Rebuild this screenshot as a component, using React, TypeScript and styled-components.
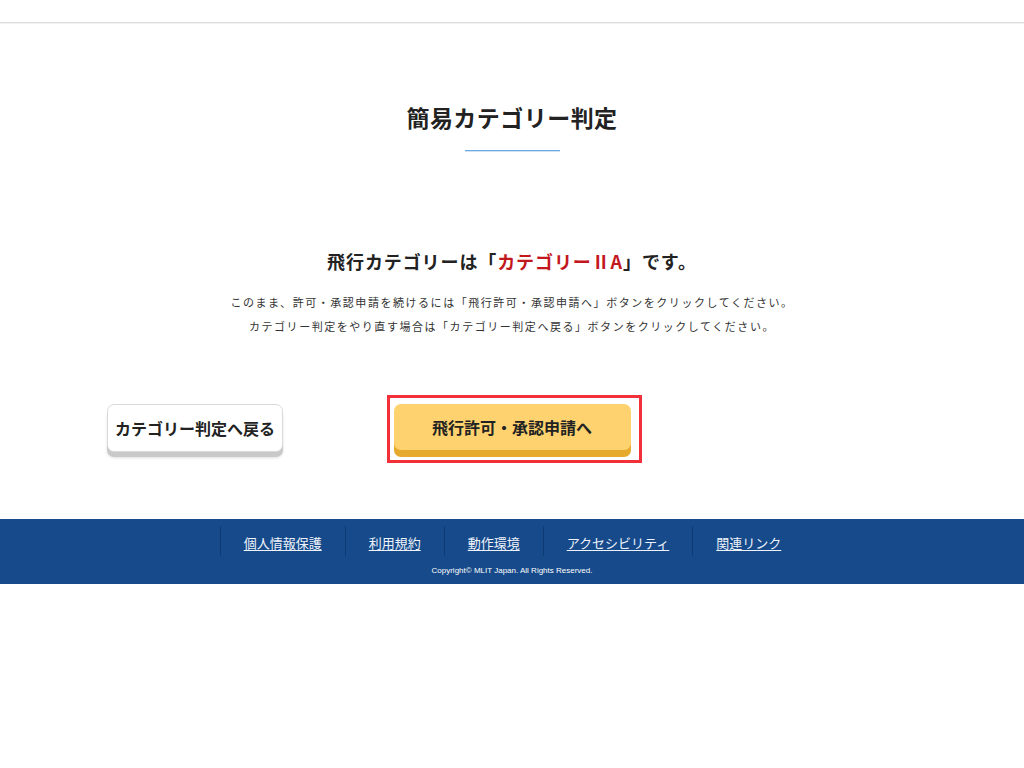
import styled, { createGlobalStyle } from "styled-components";

const GlobalStyle = createGlobalStyle`
	html, body {
		margin: 0;
		padding: 0;
		background: #fff;
	}
	body {
		font-family: "Noto Sans CJK JP", "Noto Sans", sans-serif;
		color: #222;
	}
`;

const footerLinks = ["個人情報保護", "利用規約", "動作環境", "アクセシビリティ", "関連リンク"];

export default function App() {
	return (
		<>
			<GlobalStyle />
			<Header />
			<Main>
				<Title>簡易カテゴリー判定</Title>
				<TitleLine />
				<ResultText>
					飛行カテゴリーは「<Accent>カテゴリーⅡA</Accent>」です。
				</ResultText>
				<Note>
					このまま、許可・承認申請を続けるには「飛行許可・承認申請へ」ボタンをクリックしてください。
					<br />
					カテゴリー判定をやり直す場合は「カテゴリー判定へ戻る」ボタンをクリックしてください。
				</Note>
				<ButtonRow>
					<Cell>
						<BackButton>カテゴリー判定へ戻る</BackButton>
					</Cell>
					<Cell $center>
						<Highlight>
							<ApplyButton>飛行許可・承認申請へ</ApplyButton>
						</Highlight>
					</Cell>
					<Cell />
				</ButtonRow>
			</Main>
			<Footer>
				<LinkList>
					{footerLinks.map((l) => (
						<LinkItem key={l}>
							<FooterLink href="#">{l}</FooterLink>
						</LinkItem>
					))}
				</LinkList>
				<Copyright>Copyright© MLIT Japan. All Rights Reserved.</Copyright>
			</Footer>
		</>
	);
}

const Header = styled.header`
	height: 22px;
	border-bottom: 1px solid #dcdcdc;
	box-shadow: 0 1px 0 #f1f1f1;
`;

const Main = styled.main`
	display: flex;
	flex-direction: column;
	align-items: center;
	padding: 76px 0 67px;
`;

const Title = styled.h1`
	margin: 0;
	font-size: 23px;
	line-height: 36px;
	font-weight: 700;
	letter-spacing: 0.02em;
	color: #222;
`;

const TitleLine = styled.div`
	width: 95px;
	height: 1px;
	margin-top: 15px;
	background: #6fa9e2;
	border-bottom: 1px solid #cfe3f7;
`;

const ResultText = styled.p`
	margin: 96px 0 0;
	font-size: 18px;
	line-height: 27px;
	font-weight: 700;
	letter-spacing: 0.05em;
	color: #222;
`;

const Accent = styled.span`
	color: #c3171e;
`;

const Note = styled.p`
	margin: 15px 0 0;
	font-size: 11px;
	line-height: 24px;
	letter-spacing: 0.14em;
	text-align: center;
	color: #333;
`;

const ButtonRow = styled.div`
	margin-top: 66px;
	width: 810px;
	display: grid;
	grid-template-columns: repeat(3, 1fr);
	align-items: start;
`;

const Cell = styled.div<{ $center?: boolean }>`
	display: flex;
	justify-content: ${(p) => (p.$center ? "center" : "flex-start")};
`;

const BaseButton = styled.button`
	height: 48px;
	border-radius: 7px;
	font-family: "Noto Sans CJK JP", "Noto Sans", sans-serif;
	font-size: 16px;
	font-weight: 700;
	color: #222;
	cursor: pointer;
	padding: 0;
`;

const BackButton = styled(BaseButton)`
	width: 176px;
	background: #fff;
	border: 1px solid #dadada;
	box-shadow: 0 5px 0 #c9c9c9, 0 6px 3px rgba(0, 0, 0, 0.12);
`;

const Highlight = styled.div`
	position: relative;
	&::after {
		content: "";
		position: absolute;
		inset: -9px -11px -13px -7px;
		border: 3px solid #f2303a;
		pointer-events: none;
	}
`;

const ApplyButton = styled(BaseButton)`
	width: 237px;
	height: 46px;
	background: #fed26e;
	border: none;
	box-shadow: 0 7px 0 #e6ab2e;
`;

const Footer = styled.footer`
	height: 65px;
	background: #164a8a;
	display: flex;
	flex-direction: column;
	align-items: center;
	padding-top: 7px;
	box-sizing: border-box;
`;

const LinkList = styled.ul`
	list-style: none;
	margin: 0;
	padding: 0;
	display: flex;
`;

const LinkItem = styled.li`
	padding: 3px 23px;
	border-left: 1px solid #0d3a72;
`;

const FooterLink = styled.a`
	font-size: 13px;
	line-height: 20px;
	color: #eef3fb;
	text-decoration: underline;
	text-underline-offset: 2px;
`;

const Copyright = styled.p`
	margin: 9px 0 0;
	font-family: "Liberation Sans", Arial, sans-serif;
	font-size: 8px;
	line-height: 12px;
	color: #fff;
`;
